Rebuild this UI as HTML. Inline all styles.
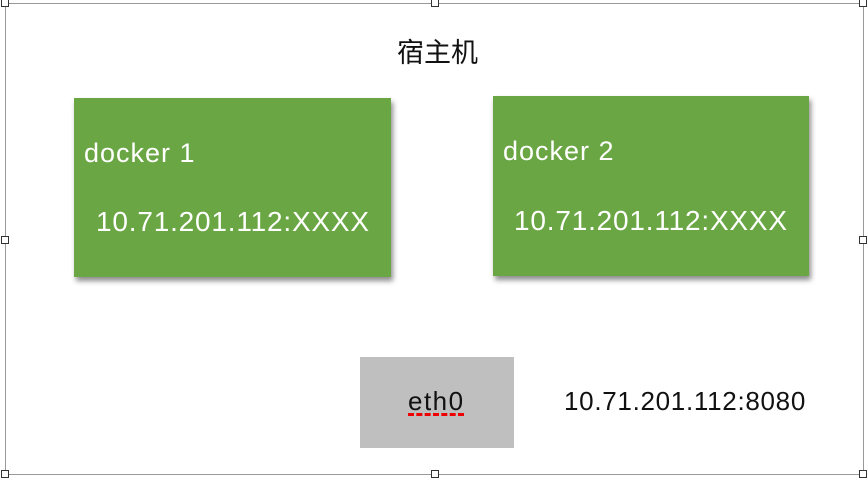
<!DOCTYPE html>
<html><head><meta charset="utf-8"><style>
body{margin:0;width:868px;height:478px;background:#fff;position:relative;overflow:hidden;font-family:"Liberation Sans","Noto Sans CJK SC",sans-serif}
.frame{position:absolute;left:5px;top:3px;width:857px;height:470px;border:1px solid #999}
.h{position:absolute;width:8px;height:8px;border:1px solid #333;background:#fff;box-sizing:border-box}
.g{position:absolute;background:#6aa744;box-shadow:2px 4px 5px rgba(0,0,0,.45);color:#fff}
.t{position:absolute;white-space:nowrap}
</style></head><body>
<div class="frame"></div>
<div class="h" style="left:1px;top:-1px"></div>
<div class="h" style="left:431px;top:-1px"></div>
<div class="h" style="left:859px;top:-1px"></div>
<div class="h" style="left:1px;top:236px"></div>
<div class="h" style="left:859px;top:236px"></div>
<div class="h" style="left:1px;top:470px"></div>
<div class="h" style="left:431px;top:470px"></div>
<div class="h" style="left:859px;top:470px"></div>
<div class="t" style="left:397px;top:31px;font-size:27px;color:#111">宿主机</div>
<div class="g" style="left:74px;top:98px;width:317px;height:179px">
<div class="t" style="left:10px;top:40px;font-size:27px;letter-spacing:1px">docker 1</div>
<div class="t" style="left:22px;top:108px;font-size:28px;letter-spacing:0.8px">10.71.201.112:XXXX</div>
</div>
<div class="g" style="left:493px;top:96px;width:316px;height:180px">
<div class="t" style="left:10px;top:40px;font-size:27px;letter-spacing:1px">docker 2</div>
<div class="t" style="left:21px;top:109px;font-size:28px;letter-spacing:0.8px">10.71.201.112:XXXX</div>
</div>
<div style="position:absolute;left:360px;top:357px;width:154px;height:91px;background:#bfbfbf"></div>
<div class="t" style="left:408px;top:386px;font-size:26px;letter-spacing:1.5px;color:#111;text-decoration:underline dashed #e00;text-decoration-thickness:3px;text-underline-offset:3px">eth0</div>
<div class="t" style="left:564px;top:386px;font-size:26px;letter-spacing:0.7px;color:#111">10.71.201.112:8080</div>
</body></html>
